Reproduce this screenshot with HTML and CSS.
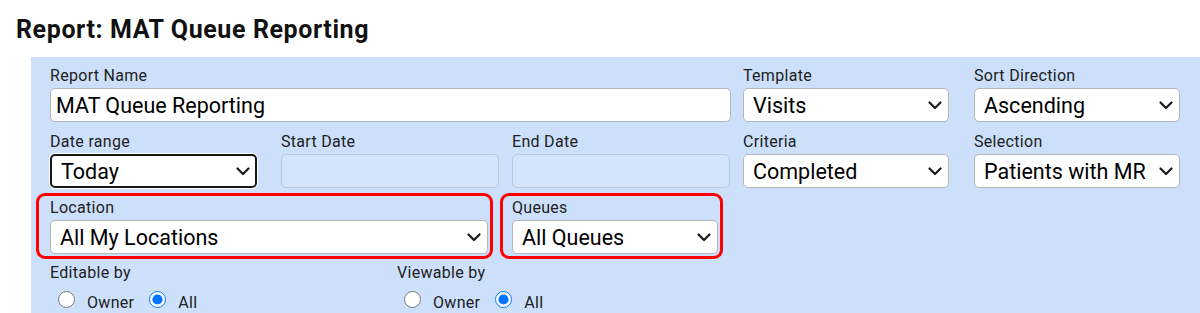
FILE: index.html
```html
<!DOCTYPE html>
<html lang="en">

<head>
    <meta charset="UTF-8">
    <meta name="viewport" content="width=device-width, initial-scale=1.0">
    <title>Report: MAT Queue Reporting</title>
    <link rel="stylesheet" href="styles.css">
</head>

<body>

    <h1 class="page-title">Report: MAT Queue Reporting</h1>

    <form class="report-panel">
        <div class="form-grid">
            <div class="field span-3">
                <label for="reportName">Report Name</label>
                <input type="text" id="reportName" class="control w-name" value="MAT Queue Reporting">
            </div>
            <div class="field">
                <label for="template">Template</label>
                <div class="select-wrap">
                    <select id="template" class="control w-206">
                        <option>Visits</option>
                    </select>
                    <svg class="chevron" width="14" height="9" viewBox="0 0 14 9"><polyline points="1.5,1.5 7,7 12.5,1.5"/></svg>
                </div>
            </div>
            <div class="field">
                <label for="sortDirection">Sort Direction</label>
                <div class="select-wrap">
                    <select id="sortDirection" class="control w-206">
                        <option>Ascending</option>
                        <option>Descending</option>
                    </select>
                    <svg class="chevron" width="14" height="9" viewBox="0 0 14 9"><polyline points="1.5,1.5 7,7 12.5,1.5"/></svg>
                </div>
            </div>

            <div class="field">
                <label for="dateRange">Date range</label>
                <div class="select-wrap">
                    <select id="dateRange" class="control w-207 focused">
                        <option>Today</option>
                        <option>Yesterday</option>
                        <option>Custom</option>
                    </select>
                    <svg class="chevron" width="14" height="9" viewBox="0 0 14 9"><polyline points="1.5,1.5 7,7 12.5,1.5"/></svg>
                </div>
            </div>
            <div class="field">
                <label for="startDate">Start Date</label>
                <input type="text" id="startDate" class="control w-218" disabled>
            </div>
            <div class="field">
                <label for="endDate">End Date</label>
                <input type="text" id="endDate" class="control w-218" disabled>
            </div>
            <div class="field">
                <label for="criteria">Criteria</label>
                <div class="select-wrap">
                    <select id="criteria" class="control w-206">
                        <option>Completed</option>
                    </select>
                    <svg class="chevron" width="14" height="9" viewBox="0 0 14 9"><polyline points="1.5,1.5 7,7 12.5,1.5"/></svg>
                </div>
            </div>
            <div class="field">
                <label for="selection">Selection</label>
                <div class="select-wrap">
                    <select id="selection" class="control w-206">
                        <option>Patients with MR</option>
                    </select>
                    <svg class="chevron" width="14" height="9" viewBox="0 0 14 9"><polyline points="1.5,1.5 7,7 12.5,1.5"/></svg>
                </div>
            </div>

            <div class="field span-2 highlight hl-location">
                <label for="location">Location</label>
                <div class="select-wrap">
                    <select id="location" class="control w-438">
                        <option>All My Locations</option>
                    </select>
                    <svg class="chevron" width="14" height="9" viewBox="0 0 14 9"><polyline points="1.5,1.5 7,7 12.5,1.5"/></svg>
                </div>
            </div>
            <div class="field highlight hl-queues">
                <label for="queues">Queues</label>
                <div class="select-wrap">
                    <select id="queues" class="control w-206">
                        <option>All Queues</option>
                    </select>
                    <svg class="chevron" width="14" height="9" viewBox="0 0 14 9"><polyline points="1.5,1.5 7,7 12.5,1.5"/></svg>
                </div>
            </div>
        </div>

        <div class="permissions">
            <div class="perm-group editable">
                <div class="perm-label">Editable by</div>
                <div class="radio-row">
                    <input type="radio" name="editable" id="editOwner">
                    <label for="editOwner" class="radio-text">Owner</label>
                    <input type="radio" name="editable" id="editAll" checked>
                    <label for="editAll" class="radio-text">All</label>
                </div>
            </div>
            <div class="perm-group viewable">
                <div class="perm-label">Viewable by</div>
                <div class="radio-row">
                    <input type="radio" name="viewable" id="viewOwner">
                    <label for="viewOwner" class="radio-text">Owner</label>
                    <input type="radio" name="viewable" id="viewAll" checked>
                    <label for="viewAll" class="radio-text">All</label>
                </div>
            </div>
        </div>
    </form>

</body>

</html>
```

FILE: styles.css
```css
body {
    font-family: Roboto, "Liberation Sans", Arial, sans-serif;
    background-color: #fff;
    color: #212121;
    margin: 0;
}

.page-title {
    font-size: 25px;
    line-height: 28px;
    font-weight: bold;
    letter-spacing: 0.6px;
    color: #111;
    margin: 16px 0 13px 16px;
}

.report-panel {
    margin-left: 31px;
    padding: 10px 0 20px 19px;
    background-color: #cce0fc;
}

.form-grid {
    display: grid;
    grid-template-columns: repeat(5, 231px);
    row-gap: 11px;
}

.field {
    display: flex;
    flex-direction: column;
    align-items: flex-start;
}

.span-2 {
    grid-column: span 2;
}

.span-3 {
    grid-column: span 3;
}

.field label {
    font-size: 16px;
    line-height: 18px;
    letter-spacing: 0.3px;
    margin-bottom: 3px;
}

.control {
    box-sizing: border-box;
    display: block;
    height: 34px;
    margin: 0;
    font-family: inherit;
    font-size: 21.5px;
    color: #000;
    background-color: #fff;
    border: 1px solid #b5b5b5;
    border-radius: 5px;
}

input.control {
    padding: 0 5px;
}

select.control {
    appearance: none;
    -webkit-appearance: none;
    padding: 0 28px 0 9px;
}

input.control:disabled {
    background-color: #d3e3fb;
    border-color: #bcc7d5;
}

.focused {
    border: 2px solid #161616;
    box-shadow: 0 0 0 1px #fff;
    padding-left: 8px;
}

.w-name { width: 681px; }
.w-206 { width: 206px; }
.w-207 { width: 207px; }
.w-218 { width: 218px; }
.w-438 { width: 438px; }

.select-wrap {
    position: relative;
}

.chevron {
    position: absolute;
    right: 7px;
    top: 13px;
    pointer-events: none;
}

.chevron polyline {
    fill: none;
    stroke: #1a1a1a;
    stroke-width: 2.2;
    stroke-linecap: round;
    stroke-linejoin: round;
}

/* red annotation boxes */
.highlight {
    position: relative;
}

.highlight::before {
    content: "";
    position: absolute;
    top: -6px;
    bottom: -5px;
    border: 3px solid #f00;
    border-radius: 9px;
    pointer-events: none;
}

.hl-location::before {
    left: -14px;
    right: 19px;
}

.hl-queues::before {
    left: -12px;
    right: 20px;
}

.permissions {
    display: flex;
    margin-top: 10px;
}

.perm-group {
    display: flex;
    flex-direction: column;
}

.editable {
    width: 347px;
}

.perm-label {
    font-size: 16px;
    line-height: 18px;
    letter-spacing: 0.3px;
}

.radio-row {
    display: flex;
    align-items: baseline;
    margin-top: 9px;
    padding-left: 8px;
    font-size: 16px;
    line-height: 18px;
    letter-spacing: 0.3px;
}

.viewable .radio-row {
    padding-left: 7px;
}

.radio-row input[type="radio"] {
    width: 17px;
    height: 17px;
    margin: 0;
}

.radio-text {
    margin: 0 15px 0 12px;
}
```
